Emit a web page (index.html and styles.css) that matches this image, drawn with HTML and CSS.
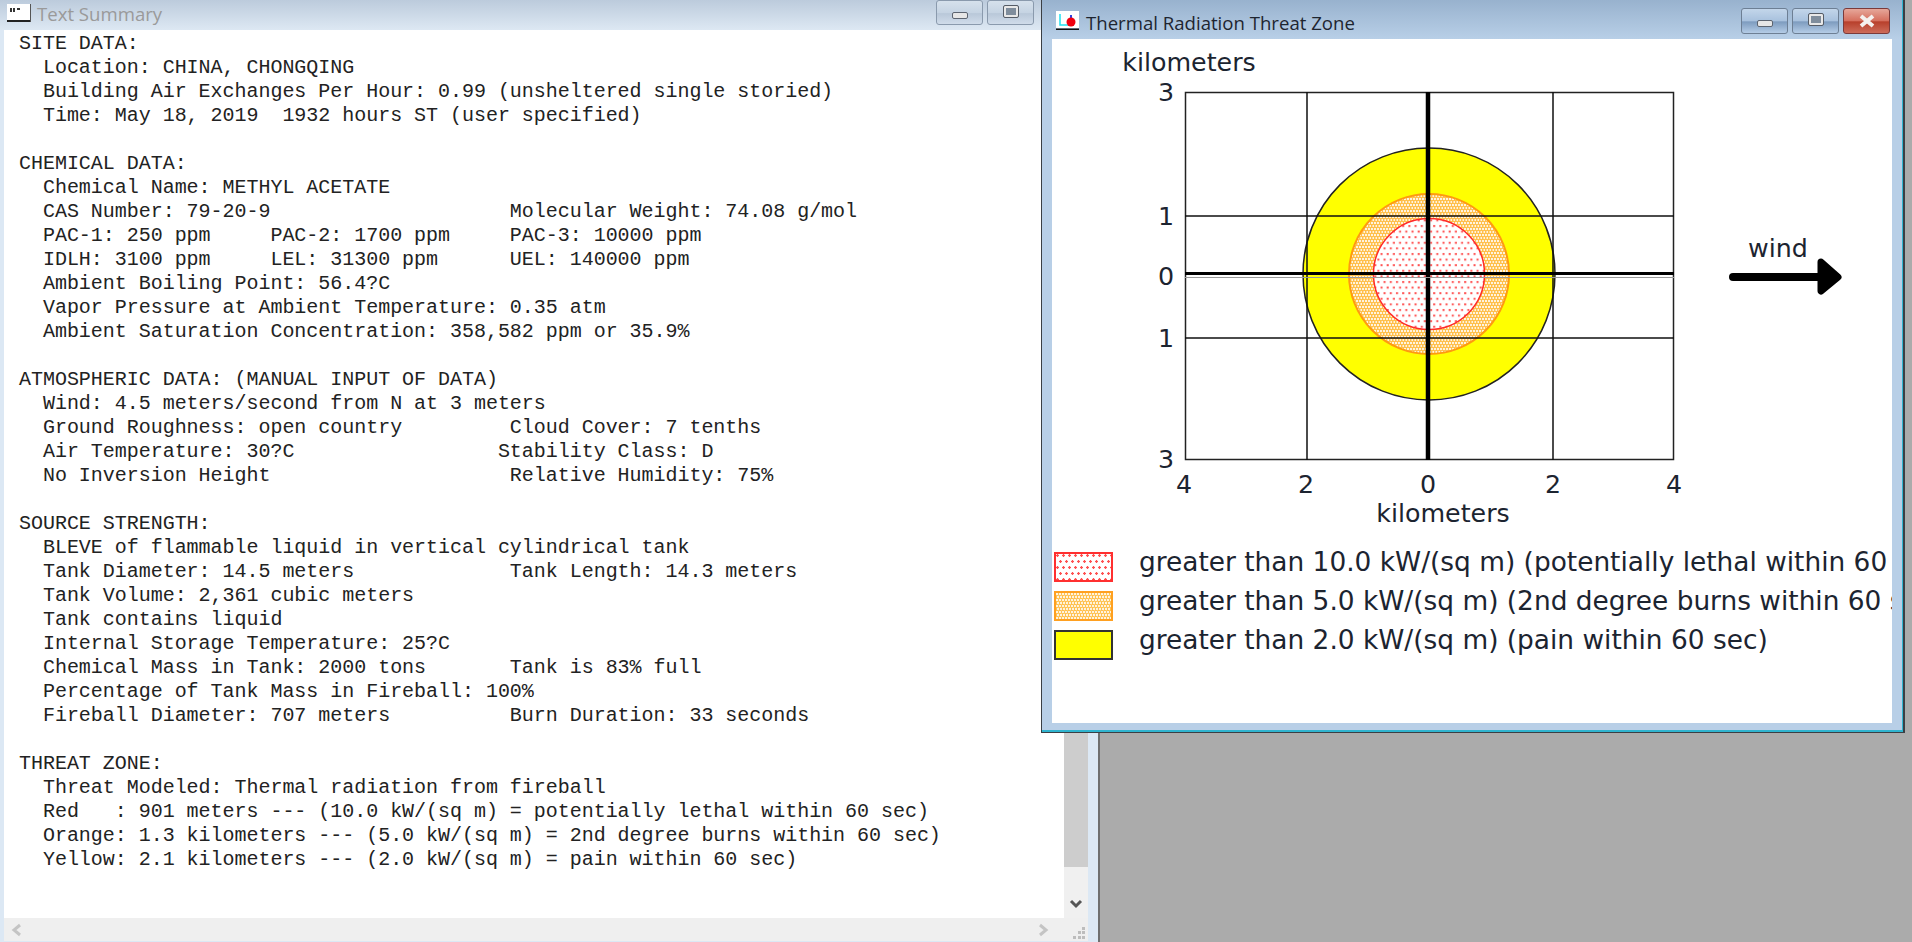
FILE: index.html
```html
<!DOCTYPE html>
<html lang="en">
  <head>
    <meta charset="UTF-8" />
    <title>Text Summary</title>
    <link rel="stylesheet" href="styles.css">
  </head>
  <body>
    <div class="desktop">
      <div class="window summary-window">
        <div class="title-bar">
          <svg class="title-icon" width="24" height="18" viewBox="0 0 24 18">
            <rect x="0" y="0" width="23" height="16" fill="#fff"/>
            <rect x="3" y="4" width="2" height="4" fill="#333"/>
            <rect x="6" y="4" width="2" height="4" fill="#333"/>
            <rect x="10" y="4" width="3" height="2" fill="#333"/>
            <rect x="0" y="16" width="24" height="2" fill="#222"/>
            <rect x="23" y="0" width="1" height="18" fill="#555"/>
          </svg>
          <span class="title-text">Text Summary</span>
          <div class="title-buttons">
            <div class="win-btn"><span class="glyph-min"></span></div>
            <div class="win-btn"><span class="glyph-max"></span></div>
          </div>
        </div>
        <div class="summary-body">
          <div class="summary-text">
<pre>SITE DATA:
  Location: CHINA, CHONGQING
  Building Air Exchanges Per Hour: 0.99 (unsheltered single storied)
  Time: May 18, 2019  1932 hours ST (user specified)

CHEMICAL DATA:
  Chemical Name: METHYL ACETATE
  CAS Number: 79-20-9                    Molecular Weight: 74.08 g/mol
  PAC-1: 250 ppm     PAC-2: 1700 ppm     PAC-3: 10000 ppm
  IDLH: 3100 ppm     LEL: 31300 ppm      UEL: 140000 ppm
  Ambient Boiling Point: 56.4?C
  Vapor Pressure at Ambient Temperature: 0.35 atm
  Ambient Saturation Concentration: 358,582 ppm or 35.9%

ATMOSPHERIC DATA: (MANUAL INPUT OF DATA)
  Wind: 4.5 meters/second from N at 3 meters
  Ground Roughness: open country         Cloud Cover: 7 tenths
  Air Temperature: 30?C                 Stability Class: D
  No Inversion Height                    Relative Humidity: 75%

SOURCE STRENGTH:
  BLEVE of flammable liquid in vertical cylindrical tank
  Tank Diameter: 14.5 meters             Tank Length: 14.3 meters
  Tank Volume: 2,361 cubic meters
  Tank contains liquid
  Internal Storage Temperature: 25?C
  Chemical Mass in Tank: 2000 tons       Tank is 83% full
  Percentage of Tank Mass in Fireball: 100%
  Fireball Diameter: 707 meters          Burn Duration: 33 seconds

THREAT ZONE:
  Threat Modeled: Thermal radiation from fireball
  Red   : 901 meters --- (10.0 kW/(sq m) = potentially lethal within 60 sec)
  Orange: 1.3 kilometers --- (5.0 kW/(sq m) = 2nd degree burns within 60 sec)
  Yellow: 2.1 kilometers --- (2.0 kW/(sq m) = pain within 60 sec)</pre>
          </div>
          <div class="v-scroll">
            <div class="v-thumb"></div>
            <div class="v-track">
              <svg width="14" height="10" viewBox="0 0 14 10"><path d="M2 2 L7 7 L12 2" fill="none" stroke="#555" stroke-width="3"/></svg>
            </div>
          </div>
        </div>
        <div class="h-scroll">
          <svg width="12" height="14" viewBox="0 0 12 14"><path d="M10 2 L4 7 L10 12" fill="none" stroke="#c4c4c4" stroke-width="3"/></svg>
          <svg width="12" height="14" viewBox="0 0 12 14"><path d="M2 2 L8 7 L2 12" fill="none" stroke="#c4c4c4" stroke-width="3"/></svg>
          <svg class="grip" width="14" height="14" viewBox="0 0 14 14">
            <g fill="#bdbdbd">
              <rect x="10" y="1" width="3" height="3"/>
              <rect x="6" y="5" width="3" height="3"/>
              <rect x="10" y="5" width="3" height="3"/>
              <rect x="1" y="10" width="3" height="3"/>
              <rect x="6" y="10" width="3" height="3"/>
              <rect x="10" y="10" width="3" height="3"/>
            </g>
          </svg>
        </div>
      </div>

      <div class="window threat-window">
        <div class="title-bar threat-title">
          <svg class="title-icon" width="23" height="20" viewBox="0 0 23 20">
            <rect x="0" y="0" width="23" height="17" fill="#fff"/>
            <path d="M4 3 V14 H18" fill="none" stroke="#20e0f0" stroke-width="1.5"/>
            <rect x="14" y="4" width="2" height="6" fill="#3040e0"/>
            <circle cx="15" cy="11" r="4.5" fill="#f00010"/>
            <rect x="0" y="17.5" width="23" height="1.5" fill="#111"/>
          </svg>
          <span class="title-text">Thermal Radiation Threat Zone</span>
          <div class="title-buttons">
            <div class="win-btn"><span class="glyph-min"></span></div>
            <div class="win-btn"><span class="glyph-max"></span></div>
            <div class="win-btn close-btn">
              <svg width="18" height="14" viewBox="0 0 18 14"><path d="M3 2 L15 12 M15 2 L3 12" stroke="#f4f0ee" stroke-width="4"/></svg>
            </div>
          </div>
        </div>
        <div class="threat-body">
          <svg class="plot" width="840" height="500" viewBox="1052 39 840 500">
            <defs>
              <pattern id="red-dots" width="6.2" height="11.2" patternUnits="userSpaceOnUse">
                <rect width="6.2" height="11.2" fill="#fff"/>
                <rect x="1" y="1" width="2" height="2" fill="#ff5050"/>
                <rect x="4.1" y="6.6" width="2" height="2" fill="#ff5050"/>
              </pattern>
              <pattern id="orange-dots" width="3" height="6" patternUnits="userSpaceOnUse">
                <rect width="3" height="6" fill="#ffc04d"/>
                <rect x="0" y="0" width="2" height="2" fill="#fff3de"/>
                <rect x="1.5" y="3" width="2" height="2" fill="#fff3de"/>
              </pattern>
            </defs>
            <rect x="1185.5" y="92.5" width="488" height="367" fill="#fff" stroke="#222" stroke-width="1.5"/>
            <circle cx="1429" cy="274" r="126" fill="#ff0" stroke="#222" stroke-width="1.5"/>
            <circle cx="1429" cy="274" r="80" fill="url(#orange-dots)" stroke="#ff9a10" stroke-width="2"/>
            <circle cx="1429" cy="274" r="55.5" fill="url(#red-dots)" stroke="#ff2a2a" stroke-width="1.5"/>
            <g stroke="#111" stroke-width="1.5">
              <path d="M1307 92 V460 M1553 92 V460 M1185 216 H1674 M1185 338 H1674"/>
            </g>
            <path d="M1428 92 V460" stroke="#000" stroke-width="4.5"/>
            <path d="M1185 273.5 H1674" stroke="#000" stroke-width="3"/>
            <path d="M1185 277.5 H1674" stroke="#999" stroke-width="1"/>
            <g class="plot-label">
              <text x="1189" y="71" text-anchor="middle">kilometers</text>
              <text x="1166" y="101" text-anchor="middle">3</text>
              <text x="1166" y="225" text-anchor="middle">1</text>
              <text x="1166" y="285" text-anchor="middle">0</text>
              <text x="1166" y="347" text-anchor="middle">1</text>
              <text x="1166" y="468" text-anchor="middle">3</text>
              <text x="1184" y="493" text-anchor="middle">4</text>
              <text x="1306" y="493" text-anchor="middle">2</text>
              <text x="1428" y="493" text-anchor="middle">0</text>
              <text x="1553" y="493" text-anchor="middle">2</text>
              <text x="1674" y="493" text-anchor="middle">4</text>
              <text x="1443" y="522" text-anchor="middle">kilometers</text>
              <text x="1778" y="257" text-anchor="middle">wind</text>
            </g>
            <path d="M1733 277 H1836" stroke="#000" stroke-width="8" stroke-linecap="round"/>
            <path d="M1821 262 L1838 277 L1821 291 Z" fill="#000" stroke="#000" stroke-width="7" stroke-linejoin="round"/>
          </svg>
          <div class="legend">
            <div class="legend-row">
              <span class="swatch swatch-red"></span>
              <span class="legend-text">greater than 10.0 kW/(sq m) (potentially lethal within 60 sec)</span>
            </div>
            <div class="legend-row">
              <span class="swatch swatch-orange"></span>
              <span class="legend-text">greater than 5.0 kW/(sq m) (2nd degree burns within 60 sec)</span>
            </div>
            <div class="legend-row">
              <span class="swatch swatch-yellow"></span>
              <span class="legend-text">greater than 2.0 kW/(sq m) (pain within 60 sec)</span>
            </div>
          </div>
        </div>
      </div>
    </div>
  </body>
</html>
```

FILE: styles.css
```css
* {
  margin: 0;
  padding: 0;
  box-sizing: border-box;
}

body {
  background-color: #ababab;
  overflow: hidden;
}

.desktop {
  position: relative;
  width: 1912px;
  height: 942px;
  overflow: hidden;
}

.window {
  position: absolute;
  display: flex;
  flex-direction: column;
}

.title-bar {
  display: flex;
  align-items: flex-start;
  flex: none;
}

.title-text {
  font-family: "Open Sans", "Noto Sans", sans-serif;
  font-size: 18.6px;
  white-space: nowrap;
}

.title-buttons {
  display: flex;
  gap: 4px;
  margin-left: auto;
}

.win-btn {
  width: 47px;
  height: 26px;
  display: flex;
  align-items: center;
  justify-content: center;
  border: 1px solid #8a9aad;
  border-radius: 3px;
}

.glyph-min {
  width: 16px;
  height: 7px;
  margin-top: 5px;
  background-color: #e6e6e6;
  border: 1px solid #5c6470;
  border-radius: 2px;
}

.glyph-max {
  width: 16px;
  height: 13px;
  margin-bottom: 3px;
  background-color: #e8e8e8;
  border: 1px solid #555c66;
  border-radius: 2px;
  box-shadow: inset 0 0 0 2px #e8e8e8, inset 0 0 0 6px #7f8d9c;
}

/* text window, sits behind */
.summary-window {
  left: 0;
  top: 0;
  width: 1100px;
  height: 942px;
  padding: 0 10px 1px 4px;
  background-color: #dce8f4;
  border-right: 2px solid #6f6f6f;
}

.summary-window .title-bar {
  height: 30px;
  margin: 0 -10px 0 -4px;
  padding-left: 7px;
  background: linear-gradient(#bccbdc, #dde8f3);
}

.summary-window .title-icon {
  margin-top: 4px;
}

.summary-window .title-text {
  margin: 1px 0 0 6px;
  color: #9a9a9a;
}

.summary-window .title-buttons {
  margin-right: 64px;
}

.summary-window .win-btn {
  height: 25px;
  background: linear-gradient(#d6e1ec, #c6d4e3 50%, #b9c8d9 55%, #d0dcea);
}

.summary-body {
  flex: 1;
  display: flex;
  min-height: 0;
}

.summary-text {
  flex: 1;
  padding: 2px 0 0 15px;
  background-color: #fff;
}

.summary-text pre {
  font-family: "Liberation Mono", "Courier New", monospace;
  font-size: 20px;
  line-height: 24px;
  letter-spacing: -0.03px;
  color: #222;
}

.v-scroll {
  width: 24px;
  display: flex;
  flex-direction: column;
  background-color: #f0f0f0;
}

.v-thumb {
  height: 837px;
  background-color: #cdcdcd;
}

.v-track {
  flex: 1;
  display: flex;
  align-items: flex-end;
  justify-content: center;
  padding-bottom: 9px;
}

.h-scroll {
  height: 23px;
  flex: none;
  display: flex;
  align-items: center;
  gap: 1016px;
  padding-left: 6px;
  position: relative;
  background-color: #efefef;
}

.grip {
  position: absolute;
  right: 2px;
  bottom: 1px;
}

/* threat zone window, on top */
.threat-window {
  left: 1041px;
  top: 0;
  width: 864px;
  height: 733px;
  padding: 0 11px 9px 10px;
  background-color: #b8cfe7;
  border: 1px solid #3a3f44;
  border-top: none;
  border-right-width: 2px;
  box-shadow: inset -1px -2px 0 #2fb4cf;
}

.threat-window .title-bar {
  height: 39px;
  margin: 0 -10px 0 -10px;
  padding: 8px 12px 0 14px;
  background: linear-gradient(#98b2ce, #b8cfe7);
}

.threat-window .title-icon {
  margin-top: 3px;
}

.threat-window .title-text {
  margin: 2px 0 0 7px;
  color: #1e2530;
}

.threat-window .win-btn {
  background: linear-gradient(#c3d6ea, #a9c2de 48%, #7e9cbf 54%, #b4cce6);
  border-color: #6d7f94;
}

.threat-window .close-btn {
  background: linear-gradient(#e6a79a, #d6705f 48%, #b8402c 54%, #cd6c5a);
  border-color: #7b3a3a;
}

.threat-body {
  flex: 1;
  display: flex;
  flex-direction: column;
  overflow: hidden;
  background-color: #fff;
}

.plot {
  display: block;
  flex: none;
}

.plot-label text {
  font-family: "DejaVu Sans", Verdana, sans-serif;
  font-size: 25.3px;
  fill: #1c2430;
}

.legend {
  display: flex;
  flex-direction: column;
  gap: 8px;
  padding: 12px 0 0 2px;
}

.legend-row {
  display: flex;
  align-items: center;
  gap: 26px;
  height: 31px;
}

.legend-text {
  margin-top: -10px;
  font-family: "DejaVu Sans", Verdana, sans-serif;
  font-size: 26.4px;
  color: #1c2430;
  white-space: nowrap;
}

.swatch {
  width: 59px;
  height: 30px;
  flex: none;
}

.swatch-red {
  border: 2px solid #ff3030;
  background-color: #fff;
  background-image: radial-gradient(circle at 1.5px 1.5px, #ff5050 1px, transparent 1.5px),
    radial-gradient(circle at 4.5px 7.5px, #ff5050 1px, transparent 1.5px);
  background-size: 6px 12px;
}

.swatch-orange {
  border: 2px solid #ffa020;
  background-color: #ffc04d;
  background-image: radial-gradient(circle at 1px 1px, #fff3de 1.2px, transparent 1.6px),
    radial-gradient(circle at 2.5px 4px, #fff3de 1.2px, transparent 1.6px);
  background-size: 3px 6px;
}

.swatch-yellow {
  border: 2px solid #333;
  background-color: #ff0;
}
```
